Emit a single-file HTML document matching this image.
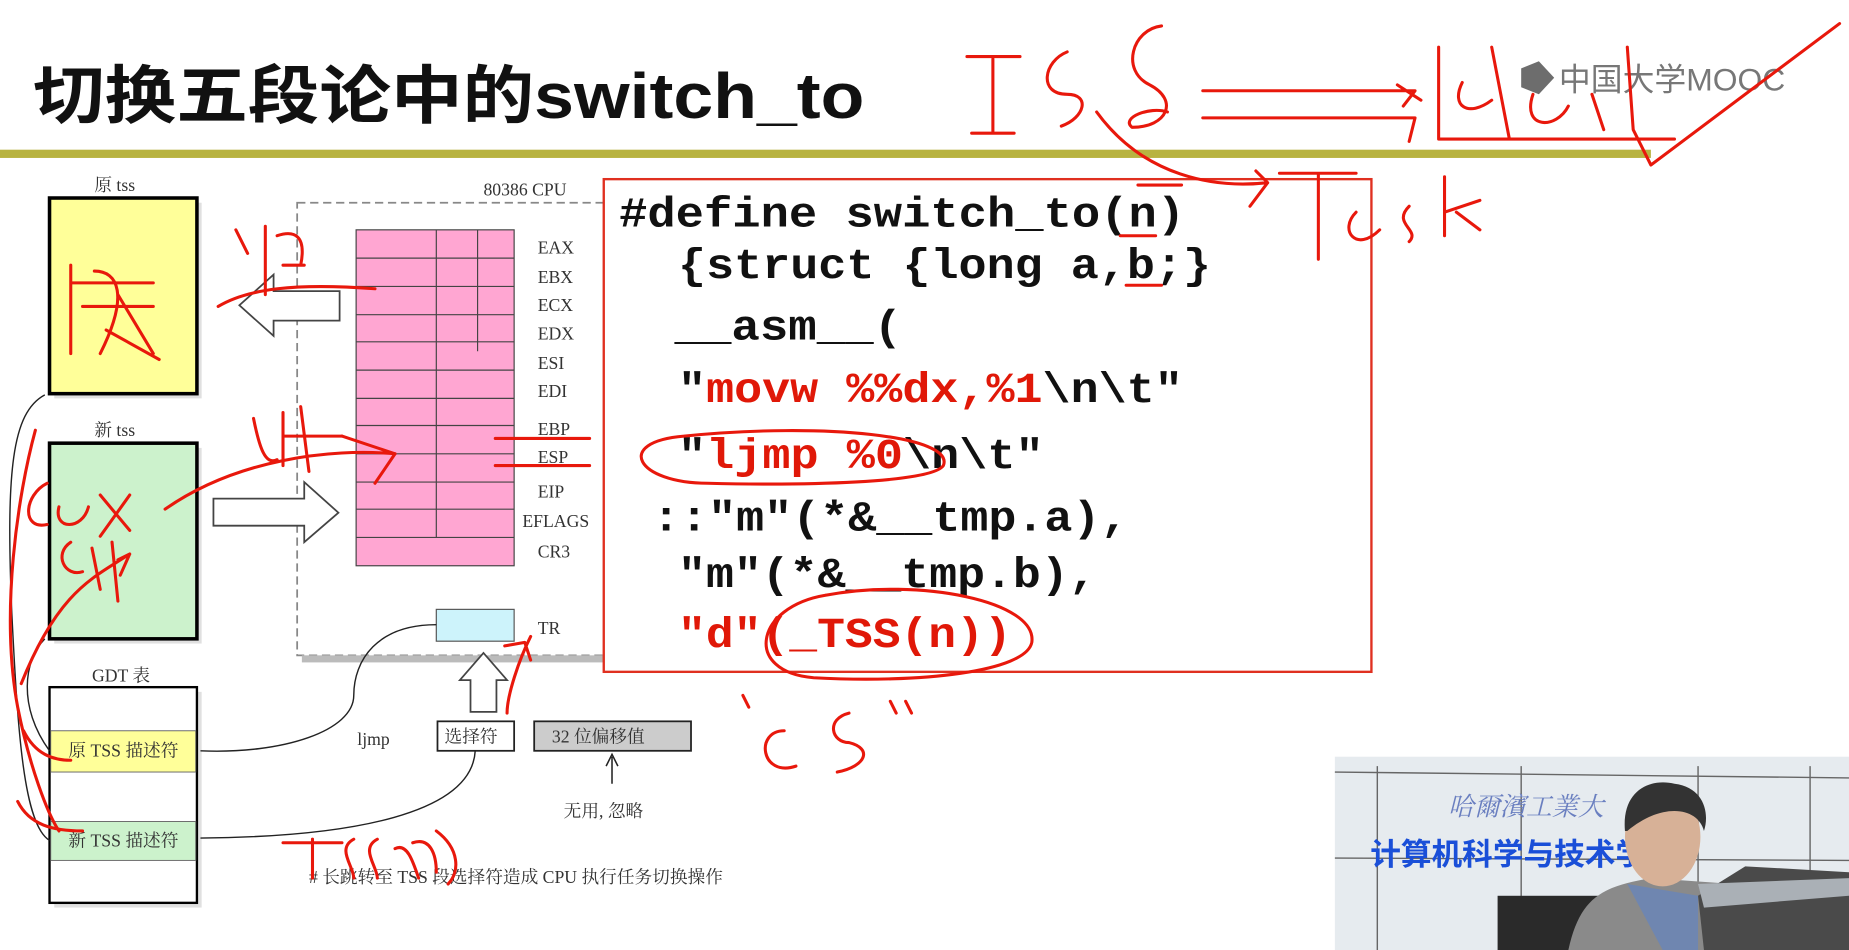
<!DOCTYPE html>
<html><head><meta charset="utf-8"><style>
html,body{margin:0;padding:0;background:#fff;overflow:hidden}
svg{display:block}
.m{font-family:"Liberation Mono",monospace;font-weight:bold;font-size:36px}
.s{font-family:"Liberation Serif","Noto Serif CJK SC",serif;font-size:15px;fill:#333}
.r{fill:none;stroke:#e8180c;stroke-width:2.6;stroke-linecap:round;stroke-linejoin:round}
</style></head><body>
<svg width="1849" height="950" viewBox="0 0 1568 806" preserveAspectRatio="none" xmlns="http://www.w3.org/2000/svg">
<rect width="1568" height="806" fill="#fff"/>
<!-- title -->
<text x="28" y="100" font-family="Liberation Sans,Noto Sans CJK SC,sans-serif" font-weight="bold" font-size="54" fill="#111" textLength="705" lengthAdjust="spacingAndGlyphs">切换五段论中的switch_to</text>
<rect x="0" y="127" width="1400" height="7" fill="#b8b340"/>
<!-- MOOC logo -->
<path d="M1290 58 L1305 52 L1318 66 L1305 80 L1290 74 Z" fill="#6d6d6d"/>
<text x="1322" y="77" font-family="Liberation Sans,Noto Sans CJK SC,sans-serif" font-size="27" fill="#777">中国大学MOOC</text>

<!-- diagram -->
<text x="80" y="162" class="s">原 tss</text>
<rect x="46" y="172" width="125" height="166" fill="#ccc" opacity=".6"/>
<rect x="42" y="168" width="125" height="166" fill="#ffff99" stroke="#000" stroke-width="3"/>
<text x="80" y="370" class="s">新 tss</text>
<rect x="46" y="380" width="125" height="166" fill="#ccc" opacity=".6"/>
<rect x="42" y="376" width="125" height="166" fill="#ccf2cc" stroke="#000" stroke-width="3"/>
<text x="410" y="166" class="s">80386 CPU</text>
<rect x="252" y="172" width="262" height="384" fill="none" stroke="#888" stroke-width="1.5" stroke-dasharray="7,4"/>
<rect x="256" y="556" width="258" height="6" fill="#bbb"/>
<g stroke="#444" stroke-width="1">
<rect x="302" y="195" width="134" height="285" fill="#ffa6d2"/>
<line x1="302" y1="219" x2="436" y2="219"/><line x1="302" y1="243" x2="436" y2="243"/>
<line x1="302" y1="267" x2="436" y2="267"/><line x1="302" y1="290" x2="436" y2="290"/>
<line x1="302" y1="314" x2="436" y2="314"/><line x1="302" y1="338" x2="436" y2="338"/>
<line x1="302" y1="361" x2="436" y2="361"/><line x1="302" y1="385" x2="436" y2="385"/>
<line x1="302" y1="409" x2="436" y2="409"/><line x1="302" y1="432" x2="436" y2="432"/>
<line x1="302" y1="456" x2="436" y2="456"/>
<line x1="370" y1="195" x2="370" y2="456"/><line x1="405" y1="195" x2="405" y2="298"/>
</g>
<g class="s" font-size="14">
<text x="456" y="215">EAX</text><text x="456" y="240">EBX</text><text x="456" y="264">ECX</text>
<text x="456" y="288">EDX</text><text x="456" y="313">ESI</text><text x="456" y="337">EDI</text>
<text x="456" y="369">EBP</text><text x="456" y="393">ESP</text><text x="456" y="422">EIP</text>
<text x="443" y="447">EFLAGS</text><text x="456" y="473">CR3</text><text x="456" y="538">TR</text>
</g>
<rect x="370" y="517" width="66" height="27" fill="#cdf3fb" stroke="#555"/>
<!-- arrows -->
<path d="M288 247 V272 H232 V285 L203 259 L232 233 V247 Z" fill="#fff" stroke="#444" stroke-width="1.5"/>
<path d="M181 423 H258 V409 L287 435 L258 460 V446 H181 Z" fill="#fff" stroke="#444" stroke-width="1.5"/>
<path d="M399 604 V577 H390 L410 554 L430 577 H421 V604 Z" fill="#fff" stroke="#444" stroke-width="1.5"/>
<!-- GDT -->
<text x="78" y="578" class="s">GDT 表</text>
<rect x="46" y="587" width="125" height="183" fill="#ccc" opacity=".6"/>
<rect x="42" y="583" width="125" height="183" fill="#fff" stroke="#000" stroke-width="2"/>
<rect x="43" y="620" width="123" height="35" fill="#ffff99" stroke="#666" stroke-width=".8"/>
<rect x="43" y="697" width="123" height="33" fill="#ccf2cc" stroke="#666" stroke-width=".8"/>
<text x="58" y="642" class="s">原 TSS 描述符</text>
<text x="58" y="718" class="s">新 TSS 描述符</text>
<text x="303" y="632" class="s">ljmp</text>
<rect x="371" y="612" width="65" height="25" fill="#fff" stroke="#222" stroke-width="1.5"/>
<text x="377" y="630" class="s">选择符</text>
<rect x="453" y="612" width="133" height="25" fill="#ccc" stroke="#222" stroke-width="1.5"/>
<text x="468" y="630" class="s">32 位偏移值</text>
<path d="M519 665 V642 M514 650 L519 640 L524 650" stroke="#222" fill="none" stroke-width="1.3"/>
<text x="478" y="693" class="s">无用, 忽略</text>
<text x="262" y="749" class="s" font-size="14">#  长跳转至 TSS 段选择符造成 CPU 执行任务切换操作</text>
<g fill="none" stroke="#222" stroke-width="1.2">
<path d="M370 530 C320 530 300 560 300 590 C300 620 240 640 170 637"/>
<path d="M403 637 C400 690 300 710 170 711"/>
<path d="M38 335 C10 350 5 400 10 520 C15 620 20 700 42 713"/>
<path d="M38 542 C20 560 15 600 42 637"/>
</g>

<!-- code box -->
<rect x="512" y="152" width="651" height="418" fill="#fff" stroke="#e03020" stroke-width="2"/>
<g class="m" fill="#111" lengthAdjust="spacingAndGlyphs">
<text x="525" y="192" textLength="480" lengthAdjust="spacingAndGlyphs">#define switch_to(n)</text>
<text x="575" y="236" textLength="452" lengthAdjust="spacingAndGlyphs">{struct {long a,b;}</text>
<text x="572" y="288" textLength="193" lengthAdjust="spacingAndGlyphs">__asm__(</text>
<text x="575" y="341" textLength="428" lengthAdjust="spacingAndGlyphs">"<tspan fill="#e01808">movw %%dx,%1</tspan>\n\t"</text>
<text x="575" y="397" textLength="310" lengthAdjust="spacingAndGlyphs">"<tspan fill="#e01808">ljmp %0</tspan>\n\t"</text>
<text x="553" y="450" textLength="404" lengthAdjust="spacingAndGlyphs">::"m"(*&amp;__tmp.a),</text>
<text x="575" y="498" textLength="355" lengthAdjust="spacingAndGlyphs">"m"(*&amp;__tmp.b),</text>
<text x="575" y="549" fill="#e01808" textLength="283" lengthAdjust="spacingAndGlyphs">"d"(_TSS(n))</text>
</g>

<!-- handwriting -->
<g class="r">
<path d="M965 157 H1002"/>
<path d="M820 48 H865 M842 50 V113 M824 113 H860"/>
<path d="M905 44 C885 52 880 80 905 80 C925 80 920 100 900 107"/>
<path d="M985 22 C960 25 950 60 975 72 C1000 85 990 108 960 108 C950 100 975 90 990 95"/>
<path d="M1020 77 H1200 L1190 90 M1020 100 H1200 L1195 120 M1185 72 L1205 85"/>
<path d="M1220 40 V118 H1420 M1240 70 C1230 90 1245 100 1265 85 M1265 40 L1280 118 M1300 80 C1290 110 1320 110 1330 90 M1350 80 L1360 110 M1380 40 L1385 110 L1400 140 L1560 20"/>
<path d="M930 95 C970 150 1030 160 1075 155 L1065 145 M1075 155 L1060 175"/>
<path d="M1085 147 H1150 M1118 147 V220 M1150 180 C1135 195 1150 215 1170 195 M1195 175 C1180 190 1205 195 1195 205 M1225 150 V200 M1225 180 L1255 170 M1235 180 L1255 195"/>
<path d="M60 225 V300 M60 240 H130 M70 260 H130 M80 230 C100 230 110 250 85 300 M90 280 L135 305 M100 250 L130 300"/>
<path d="M185 260 C210 245 250 240 318 245"/>
<path d="M200 195 L210 215 M225 192 V250 M235 200 C250 195 260 200 255 225 M240 225 H258"/>
<path d="M215 355 C220 380 225 395 235 390 M240 350 V395 M240 370 H290 M255 345 L262 400"/>
<path d="M290 370 L335 385 L318 410"/>
<path d="M140 432 C200 390 280 380 335 385"/>
<path d="M40 410 C20 420 18 450 40 445 M50 430 C45 450 70 450 75 430 M85 420 L110 450 M110 420 L85 455"/>
<path d="M60 460 C45 470 55 490 70 485 M78 465 L85 500 M95 460 L100 510"/>
<path d="M18 580 C50 500 80 490 110 470 M100 475 L110 470 L102 488"/>
<path d="M30 365 C15 420 0 520 15 600 C25 650 40 690 50 705"/>
<path d="M20 620 C30 640 45 645 60 645"/>
<path d="M15 680 C25 700 45 705 70 705"/>
<path d="M450 540 C440 560 430 590 430 605 M428 548 L445 545 L450 560"/>
<path d="M240 715 H290 M265 712 V745 M300 712 C285 720 300 735 300 745 M320 712 C305 720 320 735 320 745 M335 720 C345 715 350 730 355 745 M350 715 C365 710 370 725 370 740 M370 705 C390 720 390 740 380 750"/>
<path d="M420 372 L500 372 M420 395 L500 395"/>
<path d="M580 370 C520 375 540 410 600 410 C680 412 790 410 800 395 C810 370 700 358 580 370"/>
<path d="M700 505 C640 515 630 570 690 575 C780 580 870 570 875 545 C880 510 780 490 700 505"/>
<path d="M630 590 L635 600 M665 620 C640 620 645 660 675 650 M720 605 C700 610 705 630 720 630 C740 635 735 650 710 655 M755 595 L760 605 M768 595 L773 605"/>
<path d="M950 200 H980 M955 242 H985"/>
</g>

<!-- video -->
<rect x="1132" y="642" width="436" height="164" fill="#e6ebef"/>
<g stroke="#666" stroke-width="1.2" fill="none">
<line x1="1132" y1="655" x2="1568" y2="660"/><line x1="1132" y1="728" x2="1568" y2="730"/>
<line x1="1168" y1="650" x2="1168" y2="806"/><line x1="1290" y1="650" x2="1290" y2="806"/>
<line x1="1440" y1="650" x2="1440" y2="780"/><line x1="1535" y1="650" x2="1535" y2="806"/>
</g>
<text x="1228" y="692" font-family="Noto Serif CJK SC,serif" font-size="22" font-style="italic" fill="#6a7fc0">哈爾濱工業大</text>
<text x="1162" y="734" font-family="Noto Sans CJK SC,sans-serif" font-weight="bold" font-size="26" fill="#1a4fd8">计算机科学与技术学院</text>
<rect x="1270" y="760" width="110" height="46" fill="#2a2a2a"/>
<path d="M1330 806 C1340 760 1360 752 1400 745 L1470 750 L1480 806 Z" fill="#8a8a8a"/>
<path d="M1380 750 L1410 806 L1440 806 L1440 760 Z" fill="#6f86b0"/>
<ellipse cx="1410" cy="710" rx="32" ry="42" fill="#d7b197"/>
<path d="M1378 705 C1375 670 1400 660 1420 665 C1445 668 1450 690 1445 705 C1440 685 1410 680 1380 705 Z" fill="#333"/>
<path d="M1440 760 L1480 735 L1568 740 V806 H1445 Z" fill="#4a4a4a"/>
<path d="M1440 750 L1568 745 V760 L1445 770 Z" fill="#aab0b6"/>
</svg>
</body></html>
